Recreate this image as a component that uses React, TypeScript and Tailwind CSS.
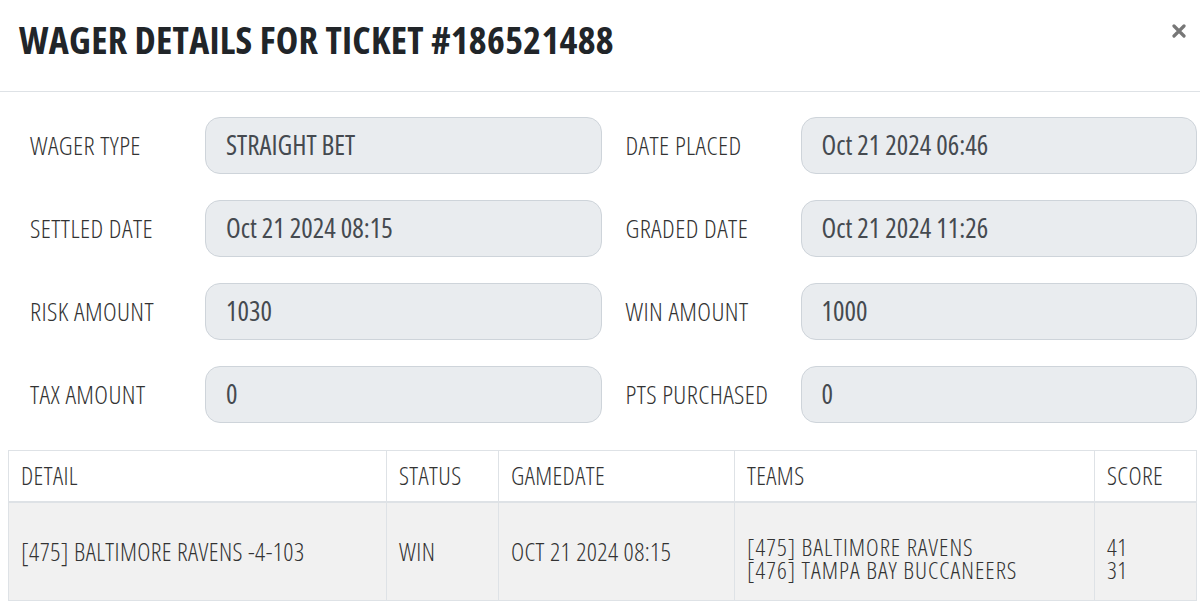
const fields: [string, string][] = [
  ['WAGER TYPE', 'STRAIGHT BET'],
  ['DATE PLACED', 'Oct 21 2024 06:46'],
  ['SETTLED DATE', 'Oct 21 2024 08:15'],
  ['GRADED DATE', 'Oct 21 2024 11:26'],
  ['RISK AMOUNT', '1030'],
  ['WIN AMOUNT', '1000'],
  ['TAX AMOUNT', '0'],
  ['PTS PURCHASED', '0'],
];

const narrow = "font-['Open_Sans',sans-serif] font-stretch-[75%]";
const cell = 'flex items-center px-3 border-r border-[#dee2e6]';

export default function App() {
  return (
    <div className={`w-[1200px] h-[610px] bg-white overflow-hidden ${narrow}`}>
      <div className="h-[92px] border-b border-[#dee2e6] flex items-start justify-between pl-[19px] pr-[14px]">
        <h1 className="mt-[20px] text-[38px] font-bold text-[#212529] leading-none tracking-[0.3px]">
          WAGER DETAILS FOR TICKET #186521488
        </h1>
        <button className="mt-[24px] text-[#777]">
          <svg width="14" height="14" viewBox="0 0 14 14">
            <path d="M2 2 L12 12 M12 2 L2 12" stroke="currentColor" strokeWidth="3.2" strokeLinecap="round" />
          </svg>
        </button>
      </div>

      <div className="grid grid-cols-2 gap-x-6 gap-y-[26px] pl-[30px] pr-[3px] pt-[25px]">
        {fields.map(([label, value]) => (
          <div key={label} className="flex items-center">
            <div className="w-[175px] text-[26px] font-light tracking-[0.4px] text-[#333] shrink-0">{label}</div>
            <div className="flex-1 h-[57px] rounded-[15px] bg-[#e9ecef] border border-[#ced4da] flex items-center px-5 text-[27px] font-[370] text-[#454a50]">
              {value}
            </div>
          </div>
        ))}
      </div>

      <div className="ml-2 mr-[3px] mt-[27px] border border-[#dee2e6] text-[25px] font-light tracking-[0.4px] text-[#333]">
        <div className="grid grid-cols-[378px_112px_236px_360px_1fr] h-[52px] bg-white border-b-2 border-[#dee2e6]">
          <div className={cell}>DETAIL</div>
          <div className={cell}>STATUS</div>
          <div className={cell}>GAMEDATE</div>
          <div className={cell}>TEAMS</div>
          <div className="flex items-center px-3">SCORE</div>
        </div>
        <div className="grid grid-cols-[378px_112px_236px_360px_1fr] h-[97px] bg-[#f1f1f1]">
          <div className={cell}>[475] BALTIMORE RAVENS -4-103</div>
          <div className={cell}>WIN</div>
          <div className={cell}>OCT 21 2024 08:15</div>
          <div className="flex flex-col justify-center px-3 border-r border-[#dee2e6] text-[24px] leading-[23px] tracking-[1px] pt-[12px]">
            <span>[475] BALTIMORE RAVENS</span>
            <span>[476] TAMPA BAY BUCCANEERS</span>
          </div>
          <div className="flex flex-col justify-center px-3 text-[24px] leading-[23px] pt-[12px]">
            <span>41</span>
            <span>31</span>
          </div>
        </div>
      </div>
    </div>
  );
}
